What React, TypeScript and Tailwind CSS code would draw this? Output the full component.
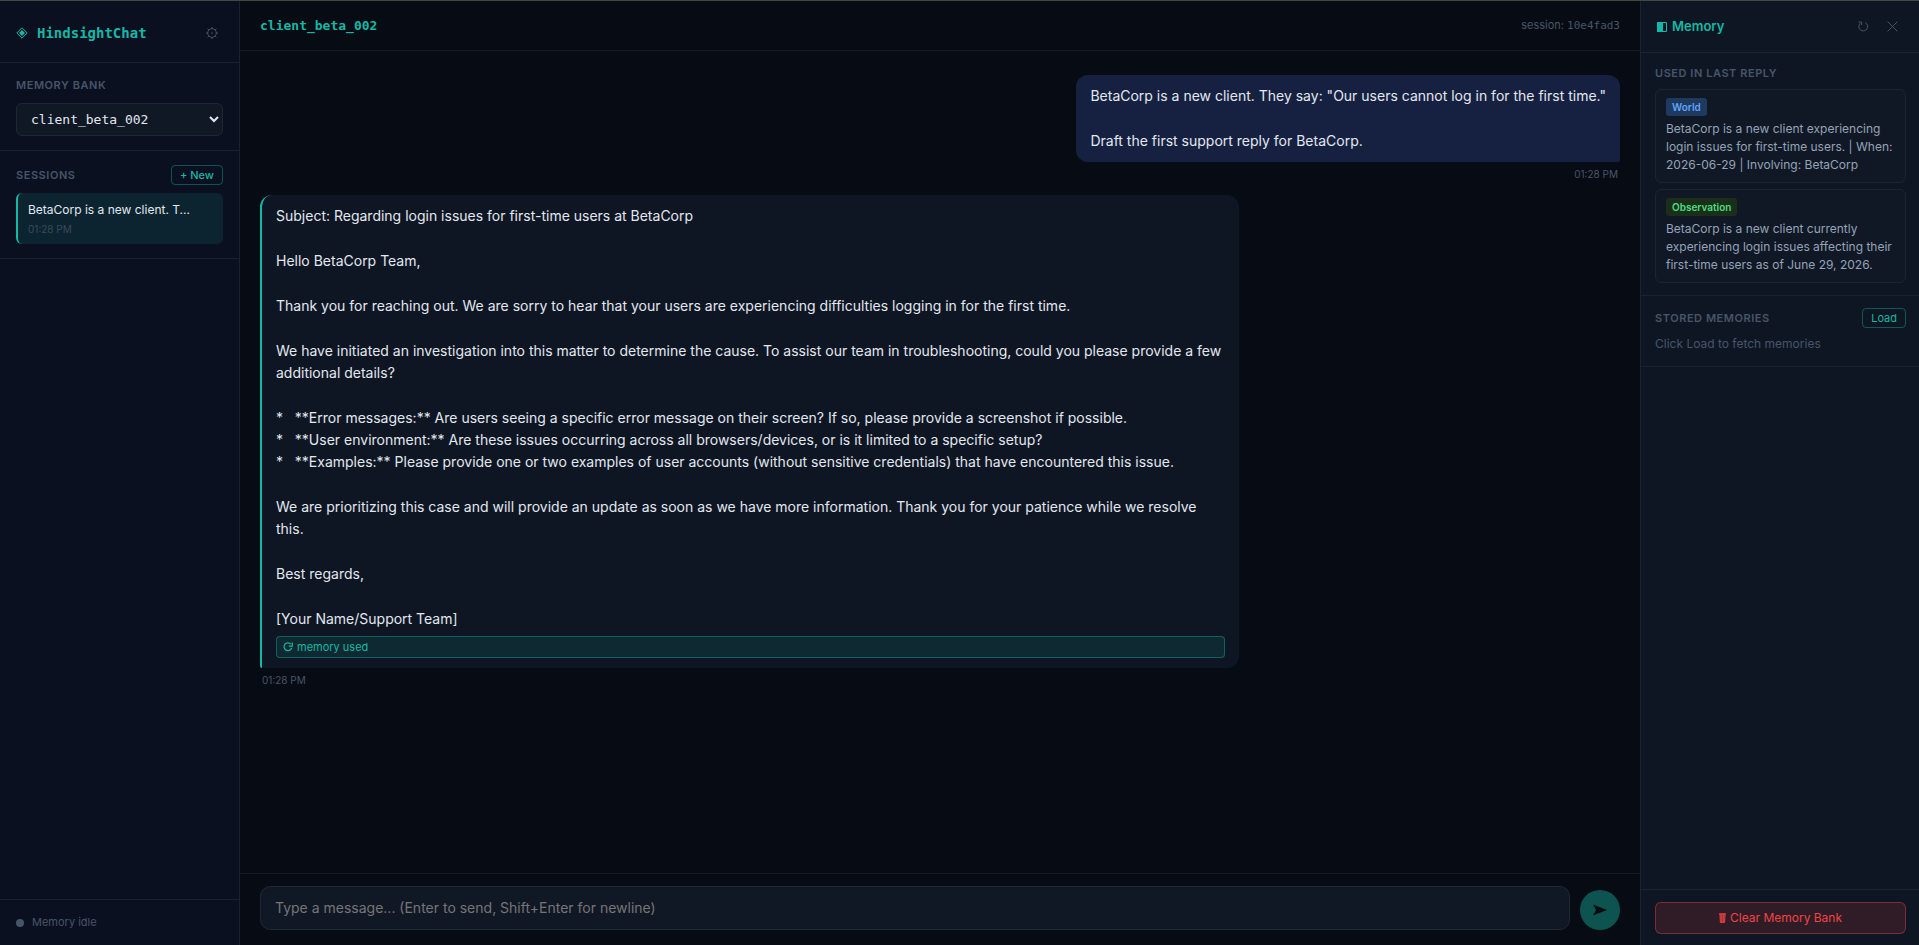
import React, { type FC, type PropsWithChildren, type ReactNode } from "react";

type Message = {
  role: "user" | "assistant";
  time: string;
  paragraphs: string[];
  memoryUsed?: boolean;
};

type Memory = {
  kind: "World" | "Observation";
  text: string;
};

const messages: Message[] = [
  {
    role: "user",
    time: "01:28 PM",
    paragraphs: [
      'BetaCorp is a new client. They say: "Our users cannot log in for the first time."',
      "Draft the first support reply for BetaCorp.",
    ],
  },
  {
    role: "assistant",
    time: "01:28 PM",
    memoryUsed: true,
    paragraphs: [
      "Subject: Regarding login issues for first-time users at BetaCorp",
      "Hello BetaCorp Team,",
      "Thank you for reaching out. We are sorry to hear that your users are experiencing difficulties logging in for the first time.",
      "We have initiated an investigation into this matter to determine the cause. To assist our team in troubleshooting, could you please provide a few additional details?",
      "*   **Error messages:** Are users seeing a specific error message on their screen? If so, please provide a screenshot if possible.\n" +
        "*   **User environment:** Are these issues occurring across all browsers/devices, or is it limited to a specific setup?\n" +
        "*   **Examples:** Please provide one or two examples of user accounts (without sensitive credentials) that have encountered this issue.",
      "We are prioritizing this case and will provide an update as soon as we have more information. Thank you for your patience while we resolve this.",
      "Best regards,",
      "[Your Name/Support Team]",
    ],
  },
];

const memories: Memory[] = [
  {
    kind: "World",
    text: "BetaCorp is a new client experiencing login issues for first-time users. | When: 2026-06-29 | Involving: BetaCorp",
  },
  {
    kind: "Observation",
    text: "BetaCorp is a new client currently experiencing login issues affecting their first-time users as of June 29, 2026.",
  },
];

const badgeColors = {
  World: "bg-[#1e3a5f] text-[#60a5fa]",
  Observation: "bg-[#1a2e1a] text-[#4ade80]",
};

const Icon = {
  Logo: () => (
    <svg className="size-3" viewBox="0 0 12 12" fill="none" stroke="currentColor">
      <path d="M6 .8 11.2 6 6 11.2.8 6Z" />
      <path d="M6 3 9 6 6 9 3 6Z" fill="currentColor" stroke="none" />
    </svg>
  ),
  Gear: () => (
    <svg className="size-3" viewBox="0 0 12 12" fill="none" stroke="currentColor">
      <circle cx="6" cy="6" r="4.3" />
      <circle cx="6" cy="6" r=".8" fill="currentColor" stroke="none" />
      <path d="M6 0v1.6M6 10.4V12M0 6h1.6M10.4 6H12M1.6 1.6l1.2 1.2M9.2 9.2l1.2 1.2M1.6 10.4l1.2-1.2M9.2 2.8l1.2-1.2" />
    </svg>
  ),
  Panel: () => (
    <svg className="size-[10px]" viewBox="0 0 10 10" fill="none" stroke="currentColor">
      <path d="M.5.5h9v9h-9Z" />
      <path d="M0 0h6v10H0Z" fill="currentColor" stroke="none" />
    </svg>
  ),
  Refresh: () => (
    <svg className="h-[11px] w-[11px]" viewBox="0 0 11 11" fill="none" stroke="currentColor">
      <path d="M7.2 1.6A4.4 4.4 0 1 1 2.2 2.4" />
      <path d="M.6 1h3v3.2" />
    </svg>
  ),
  Close: () => (
    <svg className="size-[11px]" viewBox="0 0 11 11" fill="none" stroke="currentColor">
      <path d="m.6.6 9.8 9.8M10.4.6.6 10.4" />
    </svg>
  ),
  Reload: () => (
    <svg className="size-[10px]" viewBox="0 0 10 10" fill="none" stroke="currentColor" strokeWidth="1.2">
      <path d="M7.9 2.2A3.9 3.9 0 1 0 8.6 6" />
      <path d="M9.3 .6v3.6H5.8" />
    </svg>
  ),
  Send: () => (
    <svg className="h-3 w-[14px]" viewBox="0 0 14 12" fill="currentColor">
      <path d="M0 .5 14 6 0 11.5 3 6Z" />
    </svg>
  ),
  Trash: () => (
    <svg className="h-[10px] w-[7px]" viewBox="0 0 7 10" fill="none" stroke="currentColor">
      <path d="M.5 1h6L6 9.5H1Z" fill="currentColor" fillOpacity=".5" stroke="none" />
      <path d="M0 .8h7" />
      <path d="M1 1l.4 8.5h4.2L6 1M2.7 1v8.5M4.3 1v8.5" strokeWidth=".8" />
    </svg>
  ),
};

const SectionLabel: FC<PropsWithChildren> = ({ children }) => (
  <h2 className="text-[11px] leading-4 font-semibold tracking-wider text-[#475569] uppercase">
    {children}
  </h2>
);

const OutlineButton: FC<PropsWithChildren<{ className?: string }>> = (props) => (
  <button
    className={`h-5 rounded border border-[#14b8a6]/40 px-2 text-[11px] leading-4 text-[#14b8a6] ${props.className ?? ""}`}
  >
    {props.children}
  </button>
);

const IconButton: FC<PropsWithChildren<{ label: string }>> = (props) => (
  <button aria-label={props.label} className="text-[#475569]">
    {props.children}
  </button>
);

function Sidebar() {
  return (
    <aside className="flex w-60 shrink-0 flex-col border-r border-[#1a2130] bg-[#0a101f]">
      <div className="flex items-center border-b border-[#1a2130] px-4 pt-5 pb-[17px]">
        <div className="flex flex-1 items-center gap-[9px] text-[#14b8a6]">
          <Icon.Logo />
          <h1 className="font-['DejaVu_Sans_Mono',monospace] text-sm leading-6 font-bold">
            HindsightChat
          </h1>
        </div>
        <div className="flex pr-[5px]">
          <IconButton label="Settings">
            <Icon.Gear />
          </IconButton>
        </div>
      </div>

      <div className="border-b border-[#1a2130] px-4 py-[14px]">
        <label htmlFor="bank">
          <SectionLabel>Memory bank</SectionLabel>
        </label>
        <select
          id="bank"
          className="mt-[10px] block h-[33px] w-full rounded-md border border-[#1f2735] bg-[#111825] px-[10px] font-['DejaVu_Sans_Mono',monospace] text-[13px] text-[#e2e8f0]"
        >
          <option>client_beta_002</option>
        </select>
      </div>

      <div className="border-b border-[#1a2130] px-4 py-[14px]">
        <div className="flex items-center justify-between">
          <SectionLabel>Sessions</SectionLabel>
          <OutlineButton className="font-medium">+ New</OutlineButton>
        </div>
        <button className="mt-2 block h-[51px] w-full rounded-md border-l-2 border-[#14b8a6] bg-[#0c242f] px-[10px] text-left">
          <div className="truncate pr-4 text-xs leading-5 text-[#e2e8f0]">
            BetaCorp is a new client. T...
          </div>
          <div className="mt-px text-[10px] leading-4 text-[#3b4a5c]">01:28 PM</div>
        </button>
      </div>

      <div className="mt-auto flex h-[46px] items-center gap-2 border-t border-[#1a2130] px-4">
        <span className="size-2 rounded-full bg-[#475569]" />
        <span className="text-[11px] text-[#475569]">Memory idle</span>
      </div>
    </aside>
  );
}

function Bubble({ message }: { message: Message }) {
  const isUser = message.role === "user";
  return (
    <div
      className={`flex max-w-[72%] flex-col gap-1 ${isUser ? "items-end self-end" : "items-start self-start"}`}
    >
      <div
        className={`rounded-xl px-[14px] py-[10px] ${
          isUser
            ? "rounded-br-xs bg-[#162040]"
            : "rounded-bl-xs border-l-2 border-[#14b8a6] bg-[#0f1623]"
        }`}
      >
        <div className="flex flex-col gap-[23px] text-sm leading-[22px] whitespace-pre-wrap text-[#e2e8f0]">
          {message.paragraphs.map((p, i) => (
            <p key={i}>{p}</p>
          ))}
        </div>
        {message.memoryUsed && (
          <div className="mt-[6px] flex h-[22px] items-center gap-1 rounded border border-[#14b8a6]/40 bg-[#14b8a6]/12 px-[6px] text-[11px] leading-4 text-[#14b8a6]">
            <Icon.Reload />
            memory used
          </div>
        )}
      </div>
      <time className="px-[2px] text-[10px] leading-4 text-[#475569]">{message.time}</time>
    </div>
  );
}

function Chat() {
  return (
    <main className="flex min-w-0 flex-1 flex-col">
      <header className="flex h-[50px] items-center justify-between border-b border-[#151b27] px-5">
        <h2 className="font-['DejaVu_Sans_Mono',monospace] text-[13px] font-bold text-[#14b8a6]">
          client_beta_002
        </h2>
        <div className="text-[11px] text-[#475569]">
          session: <span className="font-['DejaVu_Sans_Mono',monospace]">10e4fad3</span>
        </div>
      </header>

      <div className="flex min-h-0 flex-1 flex-col gap-[13px] overflow-hidden px-5 py-6">
        {messages.map((m) => (
          <Bubble key={m.role} message={m} />
        ))}
      </div>

      <form
        className="flex items-end gap-[10px] border-t border-[#151b27] px-5 pt-3 pb-[15px]"
        onSubmit={(e) => e.preventDefault()}
      >
        <textarea
          rows={1}
          aria-label="Message"
          placeholder="Type a message... (Enter to send, Shift+Enter for newline)"
          className="h-11 flex-1 resize-none rounded-[10px] border border-[#1f2735] bg-[#111825] px-[14px] py-[10px] text-sm leading-[22px] text-[#e2e8f0] placeholder:text-[#757575]"
        />
        <button
          aria-label="Send"
          className="flex size-10 items-center justify-center rounded-full bg-[#0d5350] text-[#080c14]"
        >
          <Icon.Send />
        </button>
      </form>
    </main>
  );
}

const MemoryCard: FC<{ memory: Memory }> = ({ memory }) => (
  <li className="rounded-md border border-[#1c2432] bg-[#111825] px-[10px] py-2">
    <div
      className={`w-fit rounded-[3px] px-[6px] text-[10px] leading-[18px] font-semibold ${badgeColors[memory.kind]}`}
    >
      {memory.kind}
    </div>
    <p className="mt-1 text-xs leading-[18px] text-[#94a3b8]">{memory.text}</p>
  </li>
);

function PanelSection(props: { title: string; action?: ReactNode; children: ReactNode }) {
  return (
    <section className="border-b border-[#1a2130] py-3 pr-[13px] pl-[14px]">
      <div className="flex items-center justify-between">
        <SectionLabel>{props.title}</SectionLabel>
        {props.action}
      </div>
      {props.children}
    </section>
  );
}

function MemoryPanel() {
  return (
    <aside className="flex w-[279px] shrink-0 flex-col border-l border-[#1c2432] bg-[#0f1623]">
      <div className="flex h-[52px] items-center border-b border-[#1c2432] px-4">
        <div className="flex flex-1 items-center gap-[5px] text-[#14b8a6]">
          <Icon.Panel />
          <h2 className="text-[13px] font-semibold">Memory</h2>
        </div>
        <div className="flex items-center gap-[18px] pr-[5px]">
          <IconButton label="Refresh">
            <Icon.Refresh />
          </IconButton>
          <IconButton label="Close">
            <Icon.Close />
          </IconButton>
        </div>
      </div>

      <PanelSection title="Used in last reply">
        <ul className="mt-2 flex flex-col gap-[6px]">
          {memories.map((m) => (
            <MemoryCard key={m.kind} memory={m} />
          ))}
        </ul>
      </PanelSection>

      <PanelSection title="Stored memories" action={<OutlineButton>Load</OutlineButton>}>
        <p className="mt-[6px] text-xs leading-5 text-[#475569]">Click Load to fetch memories</p>
      </PanelSection>

      <div className="mt-auto border-t border-[#1c2432] pt-3 pr-[13px] pb-[11px] pl-[14px]">
        <button className="flex h-8 w-full items-center justify-center gap-1 rounded-md border border-[#ef4444]/40 bg-[#ef4444]/15 text-xs text-[#ef4444]">
          <Icon.Trash />
          Clear Memory Bank
        </button>
      </div>
    </aside>
  );
}

export default function App() {
  return (
    <div className="flex h-screen overflow-hidden border-t border-[#474742] bg-[#070b14] font-['Inter',sans-serif]">
      <Sidebar />
      <Chat />
      <MemoryPanel />
    </div>
  );
}
